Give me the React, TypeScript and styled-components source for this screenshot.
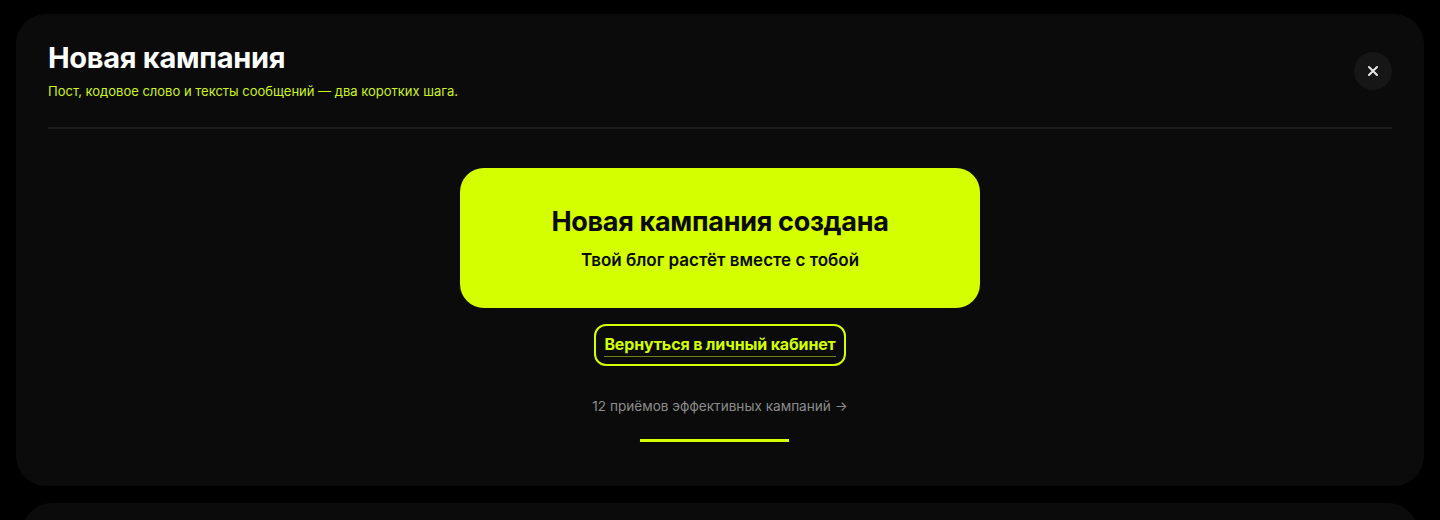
import styled, { createGlobalStyle } from "styled-components";

const GlobalStyle = createGlobalStyle`
  html, body {
    margin: 0;
    padding: 0;
    background: #000;
  }
  body {
    font-family: Inter, "Noto Sans", sans-serif;
    color: #fff;
  }
  * {
    box-sizing: border-box;
  }
`;

const CloseIcon = () => (
  <svg width="12" height="12" viewBox="0 0 12 12" fill="none">
    <path
      d="M2 2L10 10M10 2L2 10"
      stroke="#e8e8e8"
      strokeWidth="2"
      strokeLinecap="round"
    />
  </svg>
);

const App = () => {
  // step progress, 0..1
  const progress = 0.93;

  return (
    <>
      <GlobalStyle />
      <Page>
        <Card>
          <Header>
            <div className="titles">
              <h1>Новая кампания</h1>
              <p>Пост, кодовое слово и тексты сообщений — два коротких шага.</p>
            </div>
            <CloseButton aria-label="Закрыть">
              <CloseIcon />
            </CloseButton>
          </Header>
          <Divider />
          <Body>
            <SuccessBox>
              <h2>Новая кампания создана</h2>
              <p>Твой блог растёт вместе с тобой</p>
            </SuccessBox>
            <BackButton>
              <span>Вернуться в личный кабинет</span>
            </BackButton>
            <TipsLink href="#">12 приёмов эффективных кампаний →</TipsLink>
            <ProgressTrack>
              <ProgressFill style={{ width: `${progress * 100}%` }} />
            </ProgressTrack>
          </Body>
        </Card>
        <Card $short />
      </Page>
    </>
  );
};

// #region styled-components

const Page = styled.div`
  padding: 14px 16px 0;
  display: flex;
  flex-direction: column;
  gap: 17px;
  height: 520px;
  overflow: hidden;
`;

const Card = styled.section<{ $short?: boolean }>`
  background: #0b0b0b;
  border-radius: 30px;
  flex-shrink: 0;
  height: ${(p) => (p.$short ? "60px" : "472px")};
  margin: ${(p) => (p.$short ? "0 6px" : "0")};
  padding: 26px 32px 0;
`;

const Header = styled.header`
  display: flex;
  justify-content: space-between;
  align-items: center;
  padding-bottom: 27px;
  .titles {
    display: flex;
    flex-direction: column;
  }
  h1 {
    margin: 0;
    font-size: 29px;
    line-height: 36px;
    font-weight: 700;
    letter-spacing: -0.3px;
    color: #fff;
  }
  p {
    margin: 6px 0 0;
    font-size: 13px;
    line-height: 18px;
    color: #cdf31c;
  }
`;

const CloseButton = styled.button`
  width: 38px;
  height: 38px;
  border-radius: 50%;
  border: none;
  background: #161616;
  display: flex;
  align-items: center;
  justify-content: center;
  cursor: pointer;
  margin-top: 2px;
`;

const Divider = styled.hr`
  margin: 0;
  border: none;
  height: 2px;
  background: #1c1c1c;
`;

const Body = styled.div`
  display: flex;
  flex-direction: column;
  align-items: center;
  padding-top: 39px;
`;

const SuccessBox = styled.div`
  width: 520px;
  height: 140px;
  border-radius: 24px;
  background: #d4ff00;
  color: #0a0a0a;
  display: flex;
  flex-direction: column;
  align-items: center;
  justify-content: center;
  gap: 10px;
  h2 {
    margin: 0;
    font-size: 27px;
    line-height: 34px;
    font-weight: 700;
    letter-spacing: -0.3px;
  }
  p {
    margin: 0;
    font-size: 17px;
    line-height: 22px;
    font-weight: 600;
  }
`;

const BackButton = styled.button`
  margin-top: 16px;
  height: 42px;
  padding: 0 8px;
  border: 2px solid #d4ff00;
  border-radius: 12px;
  background: transparent;
  color: #d4ff00;
  font-family: Inter, "Noto Sans", sans-serif;
  font-size: 16px;
  font-weight: 700;
  letter-spacing: -0.15px;
  cursor: pointer;
  span {
    display: inline-block;
    padding-bottom: 2px;
    border-bottom: 1px solid #6f8410;
  }
`;

const TipsLink = styled.a`
  margin-top: 31px;
  font-size: 13.6px;
  line-height: 18px;
  color: #8c8c8c;
  text-decoration: none;
`;

const ProgressTrack = styled.div`
  margin-top: 24px;
  width: 160px;
  height: 3px;
`;

const ProgressFill = styled.div`
  height: 100%;
  background: #d4ff00;
`;

// #endregion

export default App;
